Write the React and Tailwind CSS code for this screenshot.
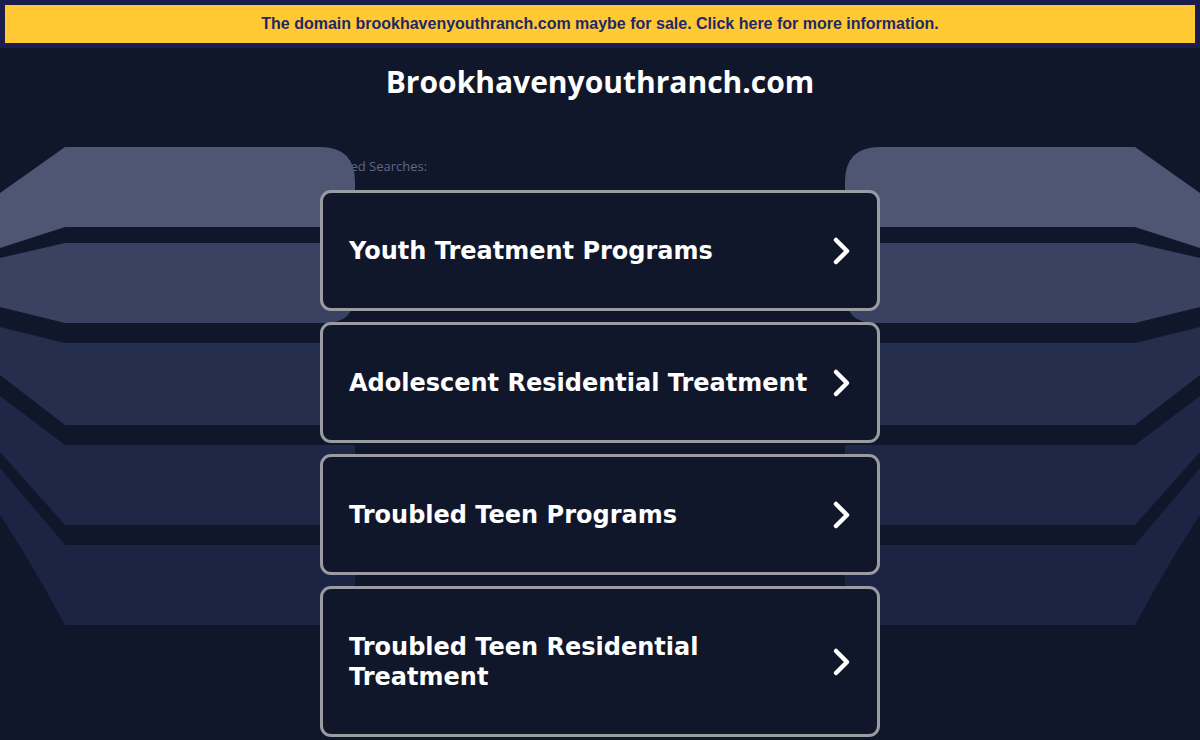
const searches = [
  'Youth Treatment Programs',
  'Adolescent Residential Treatment',
  'Troubled Teen Programs',
  'Troubled Teen Residential Treatment',
]

function Bands() {
  // decorative layered chevrons behind the list, left half; right half is mirrored
  const half = (
    <g>
      <path d="M0,193 L65,147 L320,147 Q355,147 355,182 L355,227 L65,227 L0,248 Z" fill="#4e5674" />
      <path d="M0,258 L65,243 L355,243 L355,293 Q355,323 325,323 L65,323 L0,307 Z" fill="#3a4262" />
      <path d="M0,327 L65,343 L355,343 L355,425 L65,425 L0,375 Z" fill="#262e4d" />
      <path d="M0,396 L65,445 L355,445 L355,525 L65,525 L0,452 Z" fill="#1f2747" />
      <path d="M0,468 L65,545 L355,545 L355,625 L65,625 Q30,560 0,515 Z" fill="#1c2444" />
    </g>
  )
  return (
    <svg className="absolute left-0 top-0 z-0 pointer-events-none" width="1200" height="740" viewBox="0 0 1200 740">
      {half}
      <g transform="translate(1200,0) scale(-1,1)">{half}</g>
    </svg>
  )
}

function Chevron() {
  return (
    <svg width="22" height="30" viewBox="0 0 22 30" className="shrink-0">
      <polyline points="5,4 16,15 5,26" fill="none" stroke="#ffffff" strokeWidth="4.5" strokeLinecap="round" strokeLinejoin="round" />
    </svg>
  )
}

export default function App() {
  return (
    <div className="relative w-[1200px] h-[740px] overflow-hidden bg-[#11172a]">
      <div className="bg-[#1b1d4d] p-[5px]">
        <div className="h-[38px] bg-[#ffc933] flex items-center justify-center text-[16px] font-bold text-[#1f2868]"
          style={{ fontFamily: '"Liberation Sans", Arial, sans-serif' }}>
          The domain brookhavenyouthranch.com maybe for sale. Click here for more information.
        </div>
      </div>

      <h1 className="text-center text-white font-bold text-[30px] leading-none mt-[19px]"
        style={{ fontFamily: '"Open Sans", "Noto Sans", sans-serif' }}>
        Brookhavenyouthranch.com
      </h1>

      <div className="w-[560px] mx-auto mt-[63px]">
        <p className="text-[13px] text-[#5f6786] leading-none" style={{ fontFamily: '"Open Sans", sans-serif' }}>
          Related Searches:
        </p>
        <Bands />
        <div className="relative z-10 flex flex-col gap-[11px] mt-[17px]">
          {searches.map((s) => (
            <a key={s} href="#"
              className="flex items-center justify-between min-h-[121px] rounded-[11px] border-[3px] border-[#9b9ca2] bg-[#11172a] pl-[26px] pr-[24px] py-[42.5px]"
              style={{ fontFamily: '"DejaVu Sans", Verdana, sans-serif' }}>
              <span className="text-white font-bold text-[24px] leading-[30px] max-w-[470px]">{s}</span>
              <Chevron />
            </a>
          ))}
        </div>
      </div>
    </div>
  )
}
